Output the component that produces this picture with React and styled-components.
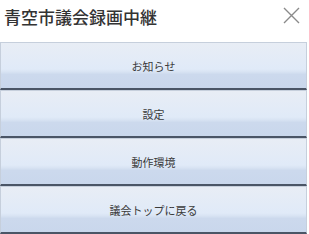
import styled, { createGlobalStyle } from "styled-components";

const GlobalStyle = createGlobalStyle`
  html, body {
    margin: 0;
    padding: 0;
    background: #fff;
    font-family: "Noto Sans CJK JP", "Noto Sans", sans-serif;
  }
`;

const items = ["お知らせ", "設定", "動作環境", "議会トップに戻る"];

export default function App() {
  return (
    <>
      <GlobalStyle />
      <StyledPanel>
        <StyledHeader>
          <StyledTitle>青空市議会録画中継</StyledTitle>
          <StyledClose aria-label="close">
            <svg width="17" height="17" viewBox="0 0 17 17">
              <path d="M1 1L16 16M16 1L1 16" stroke="#8a8a8a" strokeWidth="1.4" />
            </svg>
          </StyledClose>
        </StyledHeader>
        <StyledMenu>
          {items.map((item) => (
            <li key={item}>
              <StyledButton>{item}</StyledButton>
            </li>
          ))}
        </StyledMenu>
      </StyledPanel>
    </>
  );
}

const StyledPanel = styled.div`
  width: 309px;
  height: 234px;
  overflow: hidden;
`;

const StyledHeader = styled.header`
  height: 42px;
  display: flex;
  align-items: flex-start;
  justify-content: space-between;
  padding: 5px 9px 0 4px;
  box-sizing: border-box;
`;

const StyledTitle = styled.h1`
  margin: 0;
  font-size: 17px;
  font-weight: 500;
  color: #333;
  line-height: 24px;
`;

const StyledClose = styled.button`
  border: 0;
  background: none;
  padding: 0;
  margin-top: 2px;
  display: flex;
`;

const StyledMenu = styled.ul`
  list-style: none;
  margin: 0;
  padding: 0 2px 0 0;
  display: flex;
  flex-direction: column;
`;

const StyledButton = styled.button`
  width: 100%;
  height: 48px;
  display: flex;
  align-items: center;
  justify-content: center;
  font-family: "Noto Sans CJK JP", sans-serif;
  font-size: 11px;
  color: #3a3a3a;
  border: 1px solid #c6cfdc;
  border-bottom: 2px solid #4a5566;
  background: linear-gradient(
    to bottom,
    #e8edf5 0%,
    #e0eaf8 58%,
    #d8e3f3 64%,
    #ccd9ed 70%,
    #c9d7ec 100%
  );
  padding: 0;
`;
